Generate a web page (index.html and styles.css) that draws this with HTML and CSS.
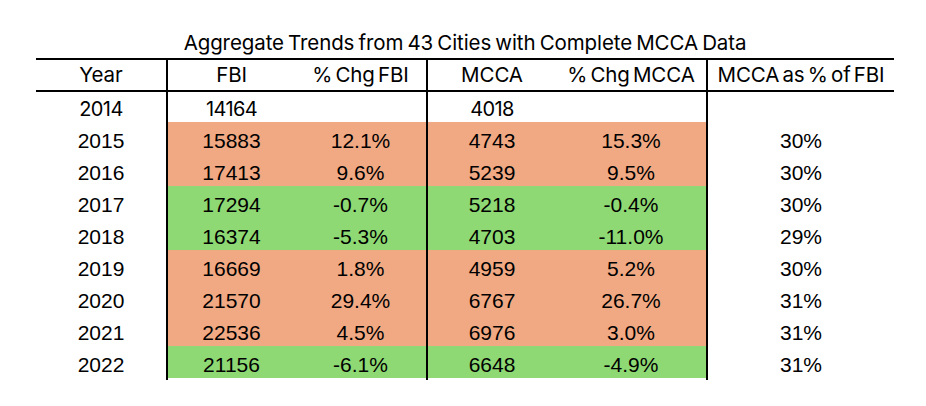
FILE: index.html
```html
<!DOCTYPE html>
<html>
<head>
<meta charset="utf-8">
<link rel="stylesheet" href="styles.css">
</head>
<body>
<div class="sheet">
  <div class="title">Aggregate Trends from 43 Cities with Complete MCCA Data</div>
  <table class="grid">
    <colgroup>
      <col class="c-year"><col class="c-fbi"><col class="c-pfbi"><col class="c-mcca"><col class="c-pmcca"><col class="c-ratio">
    </colgroup>
    <thead>
      <tr>
        <th>Year</th><th class="vl">FBI</th><th>% Chg FBI</th><th class="vl">MCCA</th><th>% Chg MCCA</th><th class="vl">MCCA as % of FBI</th>
      </tr>
    </thead>
    <tbody>
      <tr class="first">
        <td>2014</td><td class="vl">14164</td><td></td><td class="vl">4018</td><td></td><td class="vl"></td>
      </tr>
      <tr class="up">
        <td>2015</td><td class="vl">15883</td><td>12.1%</td><td class="vl">4743</td><td>15.3%</td><td class="vl">30%</td>
      </tr>
      <tr class="up">
        <td>2016</td><td class="vl">17413</td><td>9.6%</td><td class="vl">5239</td><td>9.5%</td><td class="vl">30%</td>
      </tr>
      <tr class="down">
        <td>2017</td><td class="vl">17294</td><td>-0.7%</td><td class="vl">5218</td><td>-0.4%</td><td class="vl">30%</td>
      </tr>
      <tr class="down">
        <td>2018</td><td class="vl">16374</td><td>-5.3%</td><td class="vl">4703</td><td>-11.0%</td><td class="vl">29%</td>
      </tr>
      <tr class="up">
        <td>2019</td><td class="vl">16669</td><td>1.8%</td><td class="vl">4959</td><td>5.2%</td><td class="vl">30%</td>
      </tr>
      <tr class="up">
        <td>2020</td><td class="vl">21570</td><td>29.4%</td><td class="vl">6767</td><td>26.7%</td><td class="vl">31%</td>
      </tr>
      <tr class="up">
        <td>2021</td><td class="vl">22536</td><td>4.5%</td><td class="vl">6976</td><td>3.0%</td><td class="vl">31%</td>
      </tr>
      <tr class="down">
        <td>2022</td><td class="vl">21156</td><td>-6.1%</td><td class="vl">6648</td><td>-4.9%</td><td class="vl">31%</td>
      </tr>
      <tr class="tail">
        <td></td><td class="vl"></td><td></td><td class="vl"></td><td></td><td class="vl"></td>
      </tr>
    </tbody>
  </table>
</div>
</body>
</html>
```
FILE: styles.css
```css
html, body {
  margin: 0;
  padding: 0;
  background: #ffffff;
}
.sheet {
  padding: 28px 0 0 36px;
  width: 858px;
}
.title {
  height: 30px;
  line-height: 30px;
  text-align: center;
  font-family: Inter, Roboto, "Liberation Sans", sans-serif;
  font-size: 20.5px;
  word-spacing: -1.5px;
  letter-spacing: -0.1px;
  color: #000;
}
.grid {
  border-collapse: separate;
  border-spacing: 0;
  width: 858px;
  table-layout: fixed;
  color: #000;
}
.c-year { width: 130px; }
.c-fbi { width: 129px; }
.c-pfbi { width: 131px; }
.c-mcca { width: 130px; }
.c-pmcca { width: 150px; }
.c-ratio { width: 188px; }
.grid th, .grid td {
  padding: 0;
  text-align: center;
  white-space: nowrap;
}
.grid th {
  font-family: Inter, Roboto, "Liberation Sans", sans-serif;
  font-weight: normal;
  font-size: 20.5px;
  word-spacing: -2.5px;
  letter-spacing: -0.1px;
  height: 30px;
  line-height: 30px;
  border-top: 2px solid #000;
  border-bottom: 2px solid #000;
}
.grid td {
  font-family: "Liberation Sans", Arial, sans-serif;
  font-size: 21px;
  height: 27px;
  line-height: 27px;
  padding-top: 5px;
}
.grid .first td {
  font-family: Inter, Roboto, "Liberation Sans", sans-serif;
  font-size: 20px;
  letter-spacing: -0.6px;
  height: 26px;
  line-height: 26px;
  padding-top: 4px;
}
.grid .vl {
  border-left: 2px solid #000;
}
.grid tr.up td:nth-child(n+2):nth-child(-n+5) {
  background: #f1a983;
}
.grid tr.down td:nth-child(n+2):nth-child(-n+5) {
  background: #8ed973;
}
.grid tr.tail td {
  height: 2px;
  line-height: 2px;
  padding: 0;
  font-size: 0;
}
```
